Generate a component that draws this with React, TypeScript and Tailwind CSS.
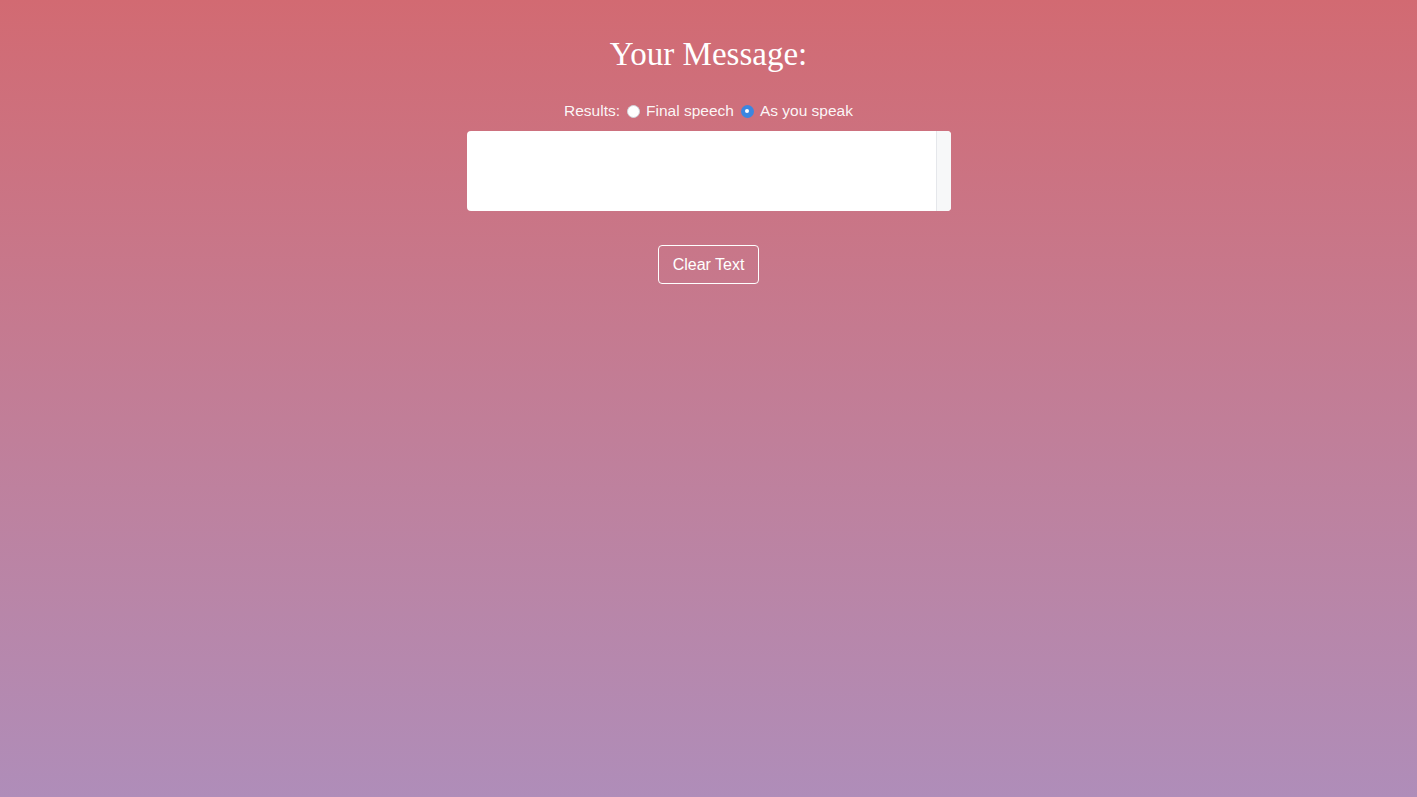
export default function App() {
  return (
    <div className="min-h-[797px] w-full bg-gradient-to-b from-[#d26a72] to-[#af8db9] text-white" style={{ fontFamily: '"Liberation Sans", Arial, sans-serif' }}>
      <div className="flex flex-col items-center pt-[32px]">
        <h1 className="text-[33px] leading-[44px] text-white" style={{ fontFamily: '"Liberation Serif", Georgia, serif' }}>
          Your Message:
        </h1>
        <div className="mt-[23px] flex items-center text-[15.5px] leading-[24px] font-light text-white/95">
          <span>Results:</span>
          <span className="ml-[7px] mr-[6px] h-[13px] w-[13px] rounded-full border border-gray-300 bg-white" />
          <span>Final speech</span>
          <span className="ml-[7px] mr-[6px] flex h-[13px] w-[13px] items-center justify-center rounded-full bg-[#3b86e0]">
            <span className="h-[4px] w-[4px] rounded-full bg-white" />
          </span>
          <span>As you speak</span>
        </div>
        <div className="mt-[8px] flex h-[80px] w-[484px] overflow-hidden rounded-[4px] bg-white">
          <div className="flex-1" />
          <div className="w-[15px] border-l border-gray-200 bg-[#f7f8f9]" />
        </div>
        <button className="mt-[34px] h-[39px] w-[101px] rounded-[4px] border border-white text-[16px] text-white">
          Clear Text
        </button>
      </div>
    </div>
  )
}
